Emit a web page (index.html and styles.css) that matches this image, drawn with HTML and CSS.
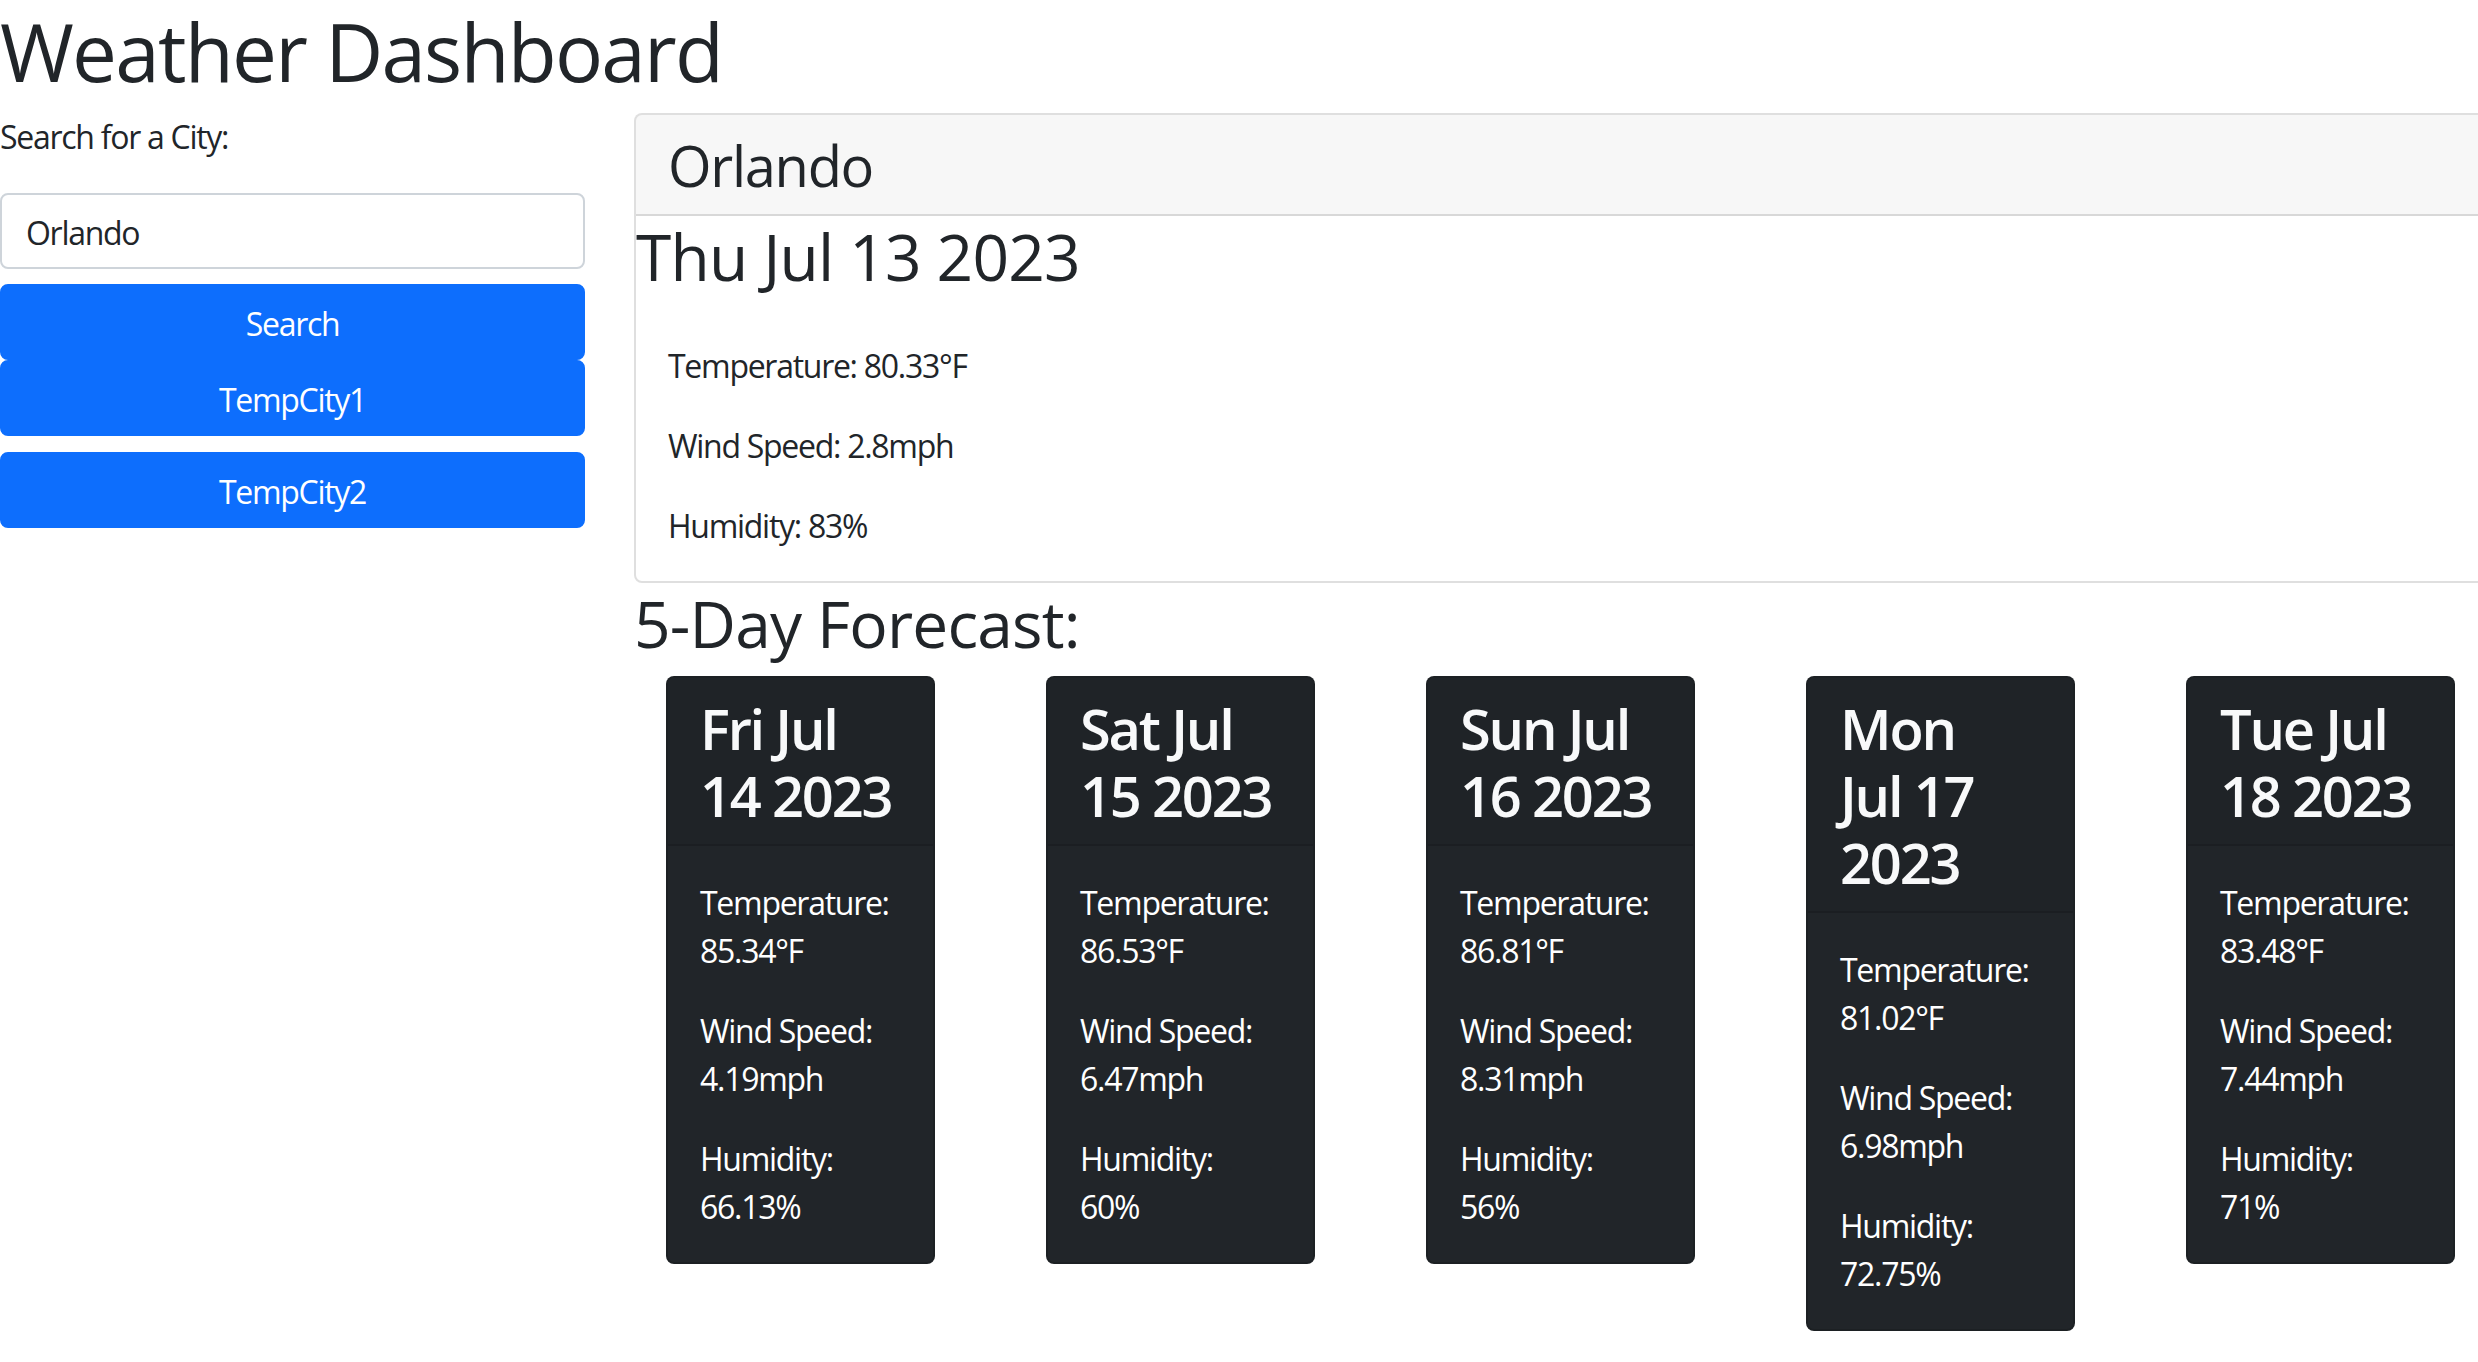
FILE: index.html
```html
<!DOCTYPE html>
<html lang="en">
<head>
<meta charset="utf-8">
<title>Weather Dashboard</title>
<link rel="stylesheet" href="styles.css">
</head>
<body>
<h1 class="title">Weather Dashboard</h1>
<div class="layout">
  <aside class="sidebar">
    <label class="search-label" for="city">Search for a City:</label>
    <input id="city" class="search-input" type="text" value="Orlando">
    <button class="btn">Search</button>
    <button class="btn">TempCity1</button>
    <button class="btn btn-gap">TempCity2</button>
  </aside>
  <main class="content">
    <section class="today">
      <header class="today-header"><h3 class="today-city">Orlando</h3></header>
      <h2 class="today-date">Thu Jul 13 2023</h2>
      <div class="today-body">
        <p>Temperature: 80.33°F</p>
        <p>Wind Speed: 2.8mph</p>
        <p>Humidity: 83%</p>
      </div>
    </section>
    <h2 class="forecast-title">5-Day Forecast:</h2>
    <div class="forecast">
      <article class="fcard">
        <header class="fcard-header"><h3 class="fcard-date">Fri Jul<br>14 2023</h3></header>
        <div class="fcard-body">
          <p>Temperature: 85.34°F</p>
          <p>Wind Speed: 4.19mph</p>
          <p>Humidity: 66.13%</p>
        </div>
      </article>
      <article class="fcard">
        <header class="fcard-header"><h3 class="fcard-date">Sat Jul<br>15 2023</h3></header>
        <div class="fcard-body">
          <p>Temperature: 86.53°F</p>
          <p>Wind Speed: 6.47mph</p>
          <p>Humidity: 60%</p>
        </div>
      </article>
      <article class="fcard">
        <header class="fcard-header"><h3 class="fcard-date">Sun Jul<br>16 2023</h3></header>
        <div class="fcard-body">
          <p>Temperature: 86.81°F</p>
          <p>Wind Speed: 8.31mph</p>
          <p>Humidity: 56%</p>
        </div>
      </article>
      <article class="fcard">
        <header class="fcard-header"><h3 class="fcard-date">Mon<br>Jul 17<br>2023</h3></header>
        <div class="fcard-body">
          <p>Temperature: 81.02°F</p>
          <p>Wind Speed: 6.98mph</p>
          <p>Humidity: 72.75%</p>
        </div>
      </article>
      <article class="fcard">
        <header class="fcard-header"><h3 class="fcard-date">Tue Jul<br>18 2023</h3></header>
        <div class="fcard-body">
          <p>Temperature: 83.48°F</p>
          <p>Wind Speed: 7.44mph</p>
          <p>Humidity: 71%</p>
        </div>
      </article>
    </div>
  </main>
</div>
</body>
</html>
```

FILE: styles.css
```css
* { box-sizing: border-box; }

html, body { overflow-x: hidden; }

body {
  margin: 0;
  font-family: "Open Sans", "Noto Sans", sans-serif;
  font-size: 32px;
  line-height: 1.5;
  letter-spacing: -1.28px;
  color: #212529;
  background: #fff;
}

h1, h2, h3, p { margin: 0; }

.title {
  font-size: 80px;
  font-weight: 400;
  line-height: 1.2;
  letter-spacing: -1.76px;
  padding-top: 3px;
  margin-bottom: 13px;
}

.layout {
  display: flex;
  align-items: flex-start;
}

.sidebar {
  width: 585px;
  flex: none;
  display: flex;
  flex-direction: column;
  margin-right: 49px;
}

.search-label {
  display: block;
  line-height: 48px;
  padding-top: 1px;
  margin-bottom: 32px;
}

.search-input {
  display: block;
  width: 100%;
  height: 76px;
  padding: 13px 24px 11px;
  font: inherit;
  letter-spacing: inherit;
  color: #212529;
  border: 2px solid #ced4da;
  border-radius: 8px;
  margin-bottom: 15px;
}

.btn {
  display: block;
  width: 100%;
  height: 76px;
  padding: 14px 24px 10px;
  font: inherit;
  letter-spacing: inherit;
  color: #fff;
  background: #0d6efd;
  border: 2px solid #0d6efd;
  border-radius: 8px;
  text-align: center;
}

.btn-gap { margin-top: 16px; }

.content {
  flex: none;
  width: 1900px;
  padding-top: 1px;
}

.today {
  border: 2px solid rgba(0, 0, 0, 0.125);
  border-radius: 8px;
  background: #fff;
}

.today-header {
  background: rgba(0, 0, 0, 0.03);
  border-bottom: 2px solid rgba(0, 0, 0, 0.125);
  padding: 17px 32px 15px;
  border-radius: 6px 6px 0 0;
}

.today-city {
  font-size: 56px;
  font-weight: 400;
  line-height: 1.2;
}

.today-date {
  font-size: 64px;
  font-weight: 400;
  line-height: 1.2;
  letter-spacing: -0.8px;
  padding-top: 3px;
  margin-bottom: 13px;
}

.today-body { padding: 33px 32px 31px; }

.today-body p + p,
.fcard-body p + p { margin-top: 32px; }

.forecast-title {
  font-size: 64px;
  font-weight: 400;
  line-height: 1.2;
  letter-spacing: -0.8px;
  padding-top: 3px;
  margin-bottom: 13px;
}

.forecast {
  display: flex;
  align-items: flex-start;
  gap: 111px;
  padding-left: 32px;
}

.fcard {
  width: 269px;
  flex: none;
  background: #212529;
  color: #fff;
  border: 2px solid rgba(0, 0, 0, 0.125);
  border-radius: 8px;
  overflow: hidden;
}

.fcard-header {
  background: rgba(0, 0, 0, 0.03);
  border-bottom: 2px solid rgba(0, 0, 0, 0.125);
  padding: 17px 32px 15px;
}

.fcard-date {
  font-size: 56px;
  font-weight: 600;
  line-height: 1.2;
  letter-spacing: -2.2px;
  white-space: nowrap;
  color: #f8f9fa;
}

.fcard-body { padding: 33px 40px 31px 32px; }
```
